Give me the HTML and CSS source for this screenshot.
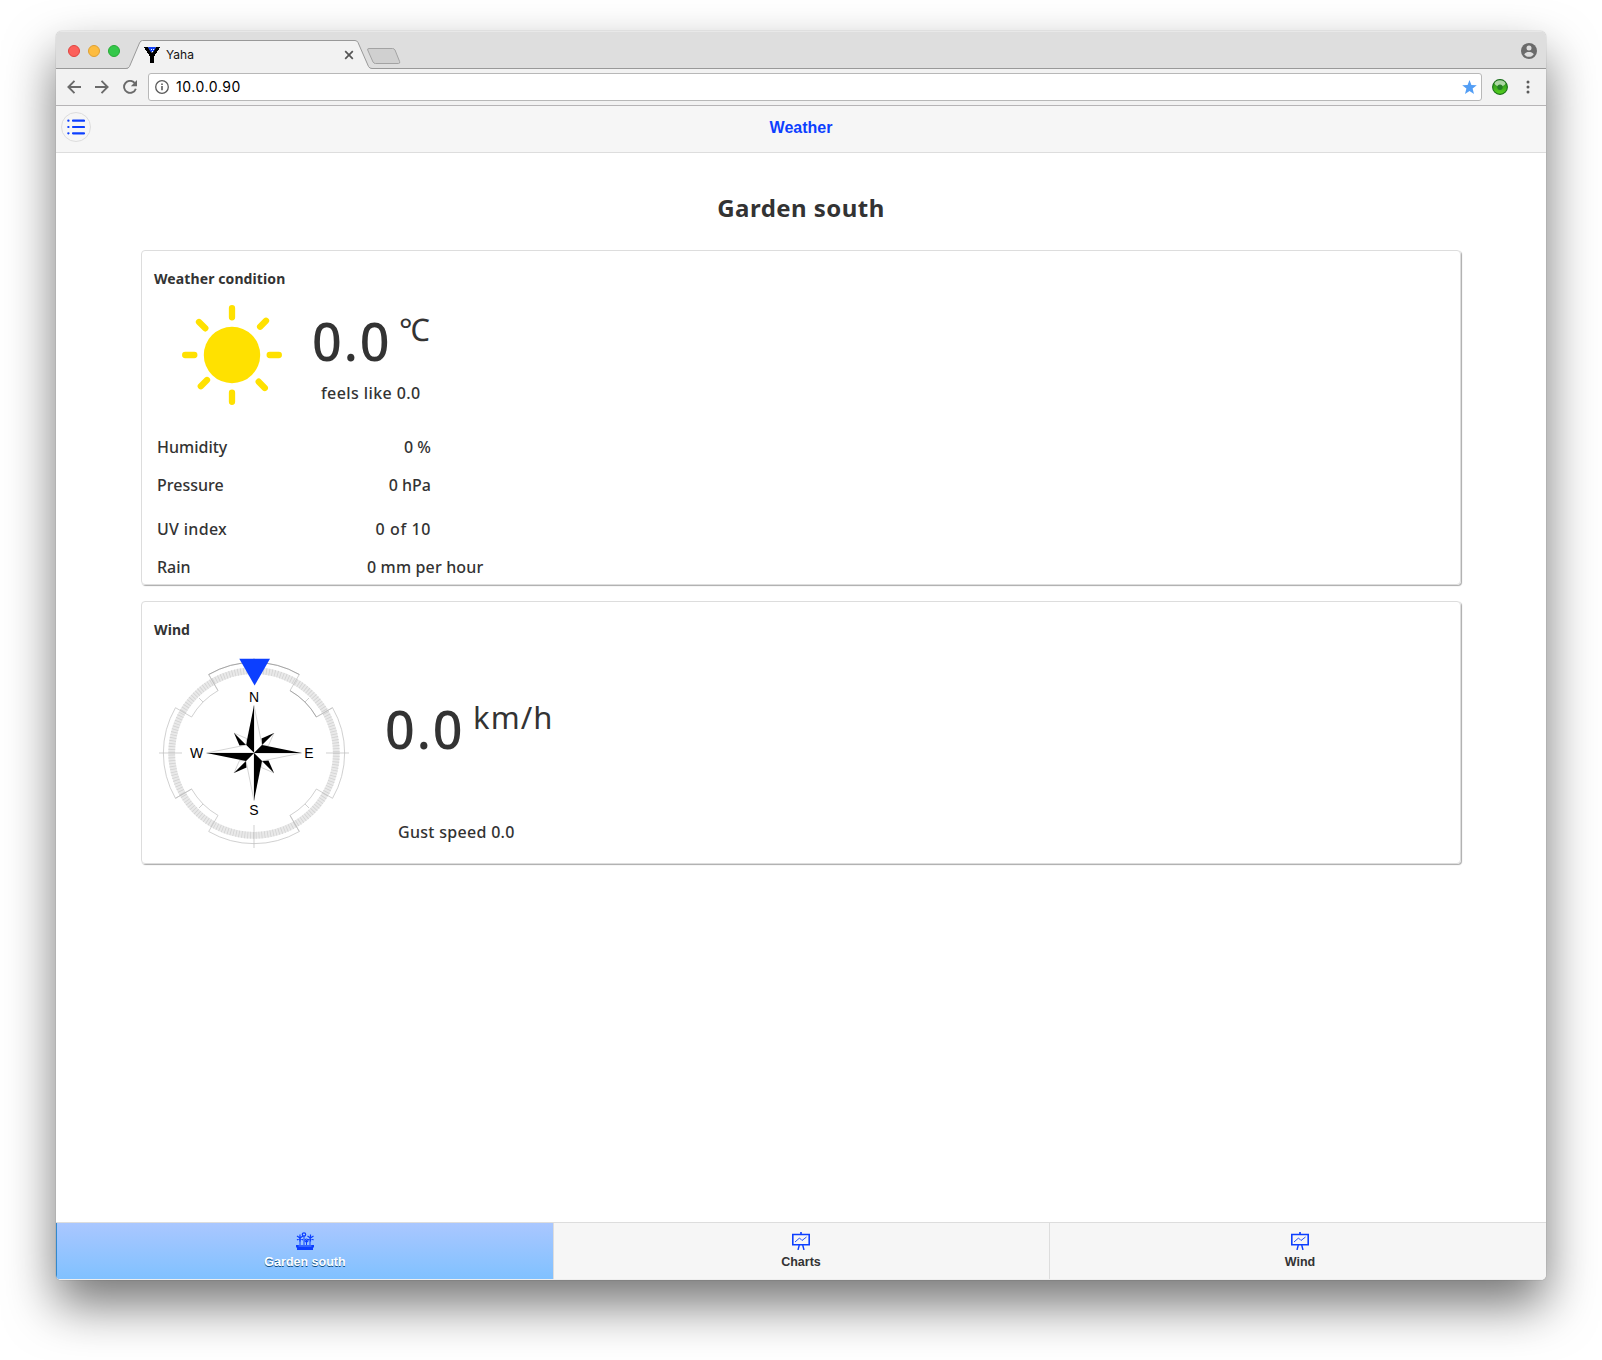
FILE: index.html
```html
<!DOCTYPE html>
<html lang="en">
<head>
<meta charset="utf-8">
<title>Yaha</title>
<link rel="stylesheet" href="styles.css">
</head>
<body>
<div class="window">
  <div class="titlebar">
    <div class="lights"><i class="light red"></i><i class="light amber"></i><i class="light green"></i></div>
    <div class="tab">
      <svg class="tab-shape" width="246" height="29" viewBox="0 0 246 29"><path d="M0 28.5H1.500Q3 28 3.500 26.500L13.500 3Q14.500 .5 16.500 .5H229Q231 .5 232 2.500L242.500 26.500Q243.500 28.500 246 28.500V29H0Z" fill="#f2f2f2"/><path d="M0 28.500Q2.500 28.500 3.500 26.500L13.500 3Q14.500 .5 16.500 .5H229Q231 .5 232 2.500L242.500 26.500Q243.500 28.500 246 28.500" fill="none" stroke="#999"/></svg>
      <div class="tab-content">
        <svg width="16" height="16" viewBox="0 0 16 16"><path d="M0 0H4L8 6 12 0H16V1H15V3H14V4H13V6H12V7H11V9H10V16H6V9H5V7H4V6H3V4H2V3H1V1H0Z" fill="#000"/><path d="M4 0H12L10.500 3 9 5H7L5.500 3Z" fill="#1442f5"/><path d="M7 2h1v1H7zM9 2h1v1H9zM8 4h1v1H8z" fill="#fff"/></svg>
        <span class="tab-name">Yaha</span>
        <svg width="10" height="10" viewBox="0 0 10 10"><path d="M1.200 1.200L8.800 8.800M8.800 1.200L1.200 8.800" stroke="#555" stroke-width="1.700"/></svg>
      </div>
    </div>
    <svg class="new-tab" width="34" height="17" viewBox="0 0 34 17"><path d="M2 .5H25.500Q27.200 .5 28 2L32.600 13.500Q33.300 15.500 31.500 15.500H8.500Q6.800 15.500 6 14L.7 2Q.2 .5 2 .5Z" fill="#d0d0d0" stroke="#a3a3a3"/></svg>
    <svg class="avatar" width="16" height="16" viewBox="0 0 16 16"><circle cx="8" cy="8" r="8" fill="#6b6b6b"/><circle cx="8" cy="5" r="2.500" fill="#dedede"/><path d="M3.200 11.200C4.200 9.600 6.200 9 8 9s3.800.6 4.800 2.200C11.700 12.900 10 13.800 8 13.800s-3.700-.9-4.800-2.600Z" fill="#dedede"/></svg>
  </div>
  <div class="toolbar">
    <svg width="14" height="14" viewBox="0 0 14 14"><path d="M14 7H1.500M7.500 .9L1.400 7l6.100 6.100" fill="none" stroke="#6a6a6a" stroke-width="1.900"/></svg>
    <svg width="14" height="14" viewBox="0 0 14 14"><path d="M0 7H12.500M6.500 .9L12.600 7l-6.100 6.100" fill="none" stroke="#6a6a6a" stroke-width="1.900"/></svg>
    <svg width="14" height="14" viewBox="0 0 14 14"><path d="M11.600 2.900A6 6 0 1 0 12.800 8.700" fill="none" stroke="#6a6a6a" stroke-width="1.900"/><path d="M14 0V6.200H7.800Z" fill="#6a6a6a"/></svg>
    <div class="address">
      <svg width="14" height="14" viewBox="0 0 14 14"><circle cx="7" cy="7" r="6.300" fill="none" stroke="#5a5a5a" stroke-width="1.300"/><path d="M7 6v4.300M7 3.400v1.600" stroke="#5a5a5a" stroke-width="1.600"/></svg>
      <span class="url">10.0.0.90</span>
      <svg width="15" height="14" viewBox="0 0 15 14"><path d="M7.500 0l1.900 4.900 5.400.3-4.200 3.400 1.400 5.300-4.500-3-4.500 3 1.400-5.300L.2 5.200l5.400-.3Z" fill="#539ef5"/></svg>
    </div>
    <svg class="orb" width="16" height="16" viewBox="0 0 16 16"><defs><linearGradient id="orb" x2="0" y2="1"><stop offset="0" stop-color="#2b8a1c"/><stop offset=".45" stop-color="#3ba820"/><stop offset="1" stop-color="#56d41c"/></linearGradient></defs><circle cx="8" cy="8" r="7.400" fill="url(#orb)" stroke="#1b701b" stroke-width="1.100"/><ellipse cx="8" cy="4.300" rx="5.300" ry="3" fill="#fff" opacity=".6"/><circle cx="8" cy="8.200" r="2.700" fill="#267f25"/></svg>
    <svg width="4" height="14" viewBox="0 0 4 14"><g fill="#5a5a5a"><circle cx="2" cy="2" r="1.500"/><circle cx="2" cy="7" r="1.500"/><circle cx="2" cy="12" r="1.500"/></g></svg>
  </div>
  <header class="page-header">
    <a class="menu"><svg width="18" height="16" viewBox="0 0 18 16"><path d="M6 1.700H17M6 8H17M6 14.300H17" stroke="#0c3fff" stroke-width="2.200" stroke-linecap="round"/><path d="M1.300 1.700h.2M1.300 8h.2M1.300 14.300h.2" stroke="#0c3fff" stroke-width="2.200" stroke-linecap="round"/></svg></a>
    <h1>Weather</h1>
  </header>
  <main>
    <h2>Garden south</h2>
    <section class="card conditions">
      <h3>Weather condition</h3>
      <div class="now">
        <svg width="100" height="100" viewBox="0 0 100 100"><circle cx="50" cy="50" r="28.200" fill="#ffe100"/><path d="M50 3.200V12.300M50 87.700V96.800M3.200 50H12.300M87.700 50H96.800M17 17L23.300 23.300M84 15.800L78.100 21.700M18.800 81.200L25 75M76.700 76.700L82.800 83" stroke="#ffe100" stroke-width="6.300" stroke-linecap="round"/></svg>
        <div class="temperature">
          <div class="reading"><span class="number">0.0</span><span class="unit degrees">℃</span></div>
          <p class="feels">feels like 0.0</p>
        </div>
      </div>
      <div class="facts">
        <span>Humidity</span><span class="value">0 %</span>
        <span>Pressure</span><span class="value">0 hPa</span>
        <span class="uv-label">UV index</span><span class="value uv">0 of 10</span>
        <span>Rain</span><span class="rain">0 mm per hour</span>
      </div>
    </section>
    <section class="card wind">
      <h3>Wind</h3>
      <div class="wind-body">
        <svg width="200" height="200" viewBox="-100 -100 200 200">
          <defs>
            <g id="quarter">
              <path d="M-45.300 -78.500A90.600 90.600 0 0 1 45.300 -78.500L36 -62.400A72 72 0 0 1 62.400 -36L78.500 -45.300M-45.300 -78.500L-36 -62.400M51 -51L55 -55M0 -72V-95" fill="none" stroke="#bcbcbc" stroke-width=".7"/>
            </g>
            <g id="point">
              <path d="M0 0L8 -8 20 -20 14.500 -7.500 8 -8" fill="#fff" stroke="#aaa" stroke-width=".5"/>
              <path d="M8 -8L20 -20 7.500 -14.500Z"/>
              <path d="M0 0V-47.500L8 -8Z" fill="#fff" stroke="#aaa" stroke-width=".5"/>
              <path d="M0 0V-47.500L-8 -8Z"/>
            </g>
          </defs>
          <circle r="82.300" fill="none" stroke="#e9e9e9" stroke-width="6.800"/>
          <circle r="82.300" fill="none" stroke="#d2d2d2" stroke-width="6.800" stroke-dasharray=".8 2.073"/>
          <use href="#quarter"/><use href="#quarter" transform="rotate(90)"/><use href="#quarter" transform="rotate(180)"/><use href="#quarter" transform="rotate(270)"/>
          <path d="M-45.300 -78.500A90.600 90.600 0 0 1 45.300 -78.500M36 -62.400A72 72 0 0 1 62.400 -36" fill="none" stroke="#888" stroke-width=".6"/>
          <use href="#point"/><use href="#point" transform="rotate(90)"/><use href="#point" transform="rotate(180)"/><use href="#point" transform="rotate(270)"/>
          <path d="M-14.700 -94.300H16L.6 -67.500Z" fill="#0c3fff"/>
          <g class="bearing"><text x="0" y="-51">N</text><text x="55" y="4.600">E</text><text x="0" y="62">S</text><text x="-57.500" y="4.600">W</text></g>
        </svg>
        <div class="wind-speed">
          <div class="reading"><span class="number">0.0</span><span class="unit">km/h</span></div>
          <p class="gust">Gust speed 0.0</p>
        </div>
      </div>
    </section>
  </main>
  <nav>
    <a class="active">
      <svg width="18" height="18" viewBox="0 0 18 18"><g fill="none" stroke="#0c3fff"><path d="M4 5V13M8 3.500V13M14 5V13M10.500 8V13" stroke-width="1"/><path d="M1 4l6 4M1 8l6-4M4 2.500v7M11.500 4l6 4M11.500 8l6-4M14.500 2.500v7" stroke-width="1.200"/><circle cx="8" cy="2.500" r="1.700" stroke-width="1.200"/><circle cx="10.500" cy="8.500" r="1.500" stroke-width="1.200"/></g><path d="M0 13H18V15.500H17V18H1V15.500H0Z" fill="#0c3fff"/><path d="M2.500 14h13" stroke="#8fbcff" stroke-width=".6"/></svg>
      <span>Garden south</span>
    </a>
    <a>
      <svg width="18" height="18" viewBox="0 0 18 18"><path d="M.8 2.500H17.200V12.700H.8ZM9 0V3" fill="none" stroke="#0c3fff" stroke-width="1.600"/><path d="M7.300 13L6 18M10.700 13L12 18" stroke="#0c3fff" stroke-width="1.400"/><path d="M3 10L7.500 6 10 8.500 14.500 5" fill="none" stroke="#0c3fff" stroke-width=".9"/></svg>
      <span>Charts</span>
    </a>
    <a>
      <svg width="18" height="18" viewBox="0 0 18 18"><path d="M.8 2.500H17.200V12.700H.8ZM9 0V3" fill="none" stroke="#0c3fff" stroke-width="1.600"/><path d="M7.300 13L6 18M10.700 13L12 18" stroke="#0c3fff" stroke-width="1.400"/><path d="M3 10L7.500 6 10 8.500 14.500 5" fill="none" stroke="#0c3fff" stroke-width=".9"/></svg>
      <span>Wind</span>
    </a>
  </nav>
</div>
</body>
</html>
```
FILE: styles.css
```css
* { box-sizing: border-box; }
body { margin: 0; padding: 31px 56px 80px; background: #fff; height: 1360px; font-family: "Noto Sans", sans-serif; color: #333; }
h1, h2, h3, p { margin: 0; }
svg { display: block; flex: none; }

.window { width: 1490px; height: 1249px; display: flex; flex-direction: column; border-radius: 6px 6px 5px 5px; overflow: hidden; background: #fff; box-shadow: 0 0 1px rgba(0,0,0,.5), 0 25px 50px rgba(0,0,0,.54); }

.titlebar { height: 38px; flex: none; display: flex; background: #dedede; box-shadow: inset 0 -1px #999, inset 0 1px #e8e8e8; }
.lights { display: flex; gap: 8px; padding: 14px 0 0 12px; width: 70px; }
.light { width: 12px; height: 12px; border-radius: 50%; }
.red { background: #fc605b; border: 1px solid #e0443f; }
.amber { background: #fdbc40; border: 1px solid #dfa032; }
.green { background: #34c84a; border: 1px solid #27aa35; }
.tab { position: relative; width: 246px; height: 29px; margin-top: 9px; }
.tab-shape { position: absolute; left: 0; top: 0; }
.tab-content { position: relative; display: flex; align-items: center; height: 29px; padding: 1px 18px 0 18px; }
.tab-name { flex: 1; padding: 0 0 2px 6px; font: 12px Inter, sans-serif; color: #111; }
.new-tab { margin: 17px 0 0 -5px; }
.avatar { margin: 12px 9px 0 auto; }

.toolbar { height: 37px; flex: none; display: flex; align-items: center; background: #f2f2f2; padding: 0 16px 0 11px; gap: 14px; border-bottom: 1px solid #b6b4b6; }
.address { flex: 1; height: 28px; margin-left: -3px; display: flex; align-items: center; background: #fff; border: 1px solid #b8b8b8; border-radius: 3px; padding: 0 4px 0 6px; }
.url { flex: 1; padding: 0 0 1px 7px; font: 14px Inter, sans-serif; letter-spacing: .55px; color: #000; }
.orb { margin: 0 4px 0 -4px; }

.page-header { height: 47px; flex: none; display: grid; grid-template-columns: 41px 1fr 41px; background: #f6f6f6; border-bottom: 1px solid #ddd; }
.menu { width: 30px; height: 30px; margin: 6px 0 0 5px; display: flex; align-items: center; justify-content: center; border: 1px solid #ddd; border-radius: 50%; }
h1 { font: bold 16px/20px "Liberation Sans", sans-serif; color: #0c3fff; text-align: center; padding-top: 12px; }

main { flex: 1; min-height: 0; padding: 0 85px; }
h2 { height: 97px; padding-top: 39px; font-size: 24px; line-height: 32px; letter-spacing: .45px; text-align: center; }
.card { border: 1px solid #ddd; border-radius: 4px; box-shadow: 1px 1px 1px #aaa; }
.conditions { height: 335px; margin-bottom: 16px; }
.wind { height: 263px; }
h3 { font-size: 14px; line-height: 20px; letter-spacing: .1px; padding: 18px 0 0 12px; }
.now { display: flex; padding: 16px 0 0 40px; height: 135px; }
.temperature { padding: 6px 0 0 30px; }
.reading { display: flex; align-items: flex-start; }
.number { font-size: 52px; font-weight: 500; line-height: 60px; letter-spacing: 1.9px; width: 87px; }
.unit { font-size: 31px; line-height: 37px; letter-spacing: 1.1px; padding-left: 1px; }
.degrees { letter-spacing: 0; padding-left: 0; }
p { font-size: 16px; font-weight: 500; line-height: 24px; letter-spacing: .4px; }
.feels { padding: 10px 0 0 9px; }
.facts { display: grid; grid-template-columns: 210px 117px; grid-template-rows: 38px 38px 50px 26px; align-items: center; padding: 4px 0 0 15px; font-size: 16px; font-weight: 500; line-height: 24px; letter-spacing: 0; white-space: nowrap; }
.value { width: 64px; text-align: right; }
.uv-label { letter-spacing: .3px; }
.uv { letter-spacing: .6px; }
.rain { letter-spacing: .15px; }
.wind-body { display: flex; padding: 13px 0 0 12px; }
.bearing { font: 14px "Liberation Sans", sans-serif; text-anchor: middle; fill: #000; }
.wind-speed { padding: 46px 0 0 31px; }
.gust { padding: 61px 0 0 13px; letter-spacing: .3px; }

nav { height: 58px; flex: none; display: grid; grid-template-columns: 498px 496px 496px; border-top: 1px solid #ddd; border-bottom: 1px solid #eee; background: #f6f6f6; }
nav a { display: flex; flex-direction: column; align-items: center; padding-top: 9px; gap: 4px; border-right: 1px solid #ddd; font: bold 12.5px/16px "Liberation Sans", sans-serif; color: #333; }
nav a:nth-child(2) { padding-right: 1px; }
nav a:last-child { border-right: 0; padding-left: 4px; }
nav .active { color: #fff; text-shadow: 0 1px #0c4f86; background: linear-gradient(#aac7ff, #80c1ff); border-left: 1px solid #3388cc; }
```
